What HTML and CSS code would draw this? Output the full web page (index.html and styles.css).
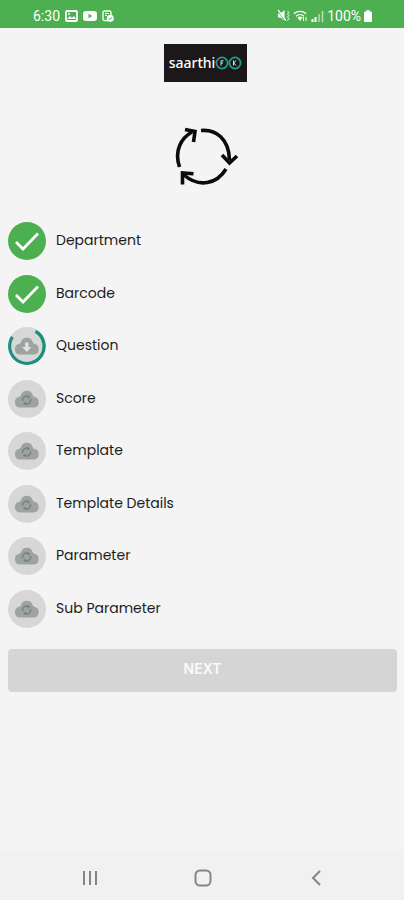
FILE: index.html
```html
<!DOCTYPE html>
<html lang="en">
<head>
<meta charset="utf-8">
<meta name="viewport" content="width=device-width, initial-scale=1">
<title>Saarthi sync</title>
<link rel="stylesheet" href="styles.css">
</head>
<body>
<svg class="defs" aria-hidden="true">
  <symbol id="check" viewBox="0 0 38 38">
    <path d="M8 20l7 7L30 11.500" fill="none" stroke="#fff" stroke-width="2.800"/>
  </symbol>
  <symbol id="cloud" viewBox="0 0 38 38">
    <path d="M12 27.500a5.400 5.400 0 0 1-.6-10.700q1.300-.4 1.600-1.700a6 6 0 0 1 11.600 0q.3 1.300 1.600 1.700a5.400 5.400 0 0 1-.6 10.700z" fill="#9da39f"/>
  </symbol>
  <symbol id="pending" viewBox="0 0 38 38">
    <use href="#cloud"/>
    <path d="M14.600 21a4.200 4.200 0 0 1 6.500-4.200M22.600 19a4.200 4.200 0 0 1-6.500 4.300" fill="none" stroke="#75807a" stroke-width="1.300"/>
    <path d="M19.800 15.300l2.600 2-3 1.200zM17.500 25l-2.700-2 3.100-1.200z" fill="#75807a"/>
  </symbol>
  <symbol id="loading" viewBox="0 0 38 38">
    <use href="#cloud"/>
    <path d="M17.100 15.500h3.400v4.500h3L18.800 25l-4.700-5h3z" fill="#e2e2e2"/>
    <path d="M27.500 4.300A17.300 17.300 0 1 1 4.300 9.800" fill="none" stroke="#1b9080" stroke-width="3.400"/>
  </symbol>
</svg>

<header class="status">
  <div class="status-group">
    <span>6:30</span>
    <svg width="13" height="12" viewBox="0 0 13 12"><rect x="1" y="1" width="11" height="10" rx="1" fill="none" stroke="#fff" stroke-width="1.800"/><path d="M2 9l3-3 2 2 2-2 2 3z" fill="#fff"/><circle cx="4" cy="4" r="1" fill="#fff"/></svg>
    <svg width="14" height="12" viewBox="0 0 14 12"><rect y="1" width="14" height="10" rx="3" fill="#fff"/><path d="M5.500 3.800v4.400L9.300 6z" fill="#4caf50"/></svg>
    <svg width="12" height="12" viewBox="0 0 12 12"><rect x="1" y="1" width="8" height="9.500" rx="1.500" fill="none" stroke="#fff" stroke-width="1.300"/><path d="M3 3.500h4M3 5.500h2" stroke="#fff"/><circle cx="8.300" cy="8.200" r="3.500" fill="#fff"/><path d="M6.500 8.200l1.300 1.300 2.400-2.400" fill="none" stroke="#4caf50"/></svg>
  </div>
  <div class="status-group status-right">
    <svg width="13" height="13" viewBox="0 0 13 13"><path d="M1 4.500h2.500L7.500 1v11L3.500 8.500H1z" fill="#fff"/><path d="M.5 1.500l7.500 10.500" stroke="#4caf50"/><path d="M1 .8l8 10.700" stroke="#fff" stroke-width="1.300"/><path d="M10.500 2l1.500 1.500-1.500 1.500L12 6.500 10.500 8l1.500 1.500-1.500 2" fill="none" stroke="#fff"/></svg>
    <svg width="15" height="13" viewBox="0 0 15 13"><path d="M.8 4.700a9.500 9.500 0 0 1 12.400 0M3 7.200a6 6 0 0 1 8 0" fill="none" stroke="#fff" stroke-width="1.300"/><path d="M4.500 8.500a4 4 0 0 1 5 0L7 12z" fill="#fff"/><path d="M10.500 8v4M13 8v4" stroke="#fff"/></svg>
    <svg width="13" height="12" viewBox="0 0 13 12"><path d="M1.500 12V9M4.500 12V7" stroke="#fff" stroke-width="2"/><path d="M8 12V4M11.500 12V1" stroke="#b9dfba" stroke-width="1.500"/></svg>
    <span>100%</span>
    <svg width="8" height="12" viewBox="0 0 8 12"><path d="M2.500 0h3v1.500H7q1 0 1 1V11q0 1-1 1H1q-1 0-1-1V2.500q0-1 1-1h1.500z" fill="#fff"/></svg>
  </div>
</header>

<main class="screen">
  <div class="logo">
    <span>saarthi</span>
    <svg width="27" height="14" viewBox="0 0 27 14" aria-hidden="true"><g fill="none" stroke="#17a08f" stroke-width="1.800"><circle cx="7" cy="7" r="5.600"/><circle cx="20" cy="7" r="5.600"/></g><path d="M6 9.500V4.800h2.500M6 7h2M18.500 4.500v5M21 4.500L18.800 7 21 9.500" fill="none" stroke="#d5e5e3"/></svg>
  </div>

  <svg class="sync" width="66" height="60" viewBox="0 0 66 60" role="img" aria-label="Syncing">
    <g fill="none" stroke="#0b0b0b" stroke-width="3.600">
      <path d="M28 4.500C43 3 56 13 56.500 34"/>
      <path d="M49 29l7.500 8 7.500-7"/>
      <path d="M53 43C44 58 26 62 11 49"/>
      <path d="M9.500 58.500V47l11 .8"/>
      <path d="M6.500 41C1 25 8 12 19 6"/>
      <path d="M12 3.500l10 2-1.500 10.500"/>
    </g>
  </svg>

  <ul class="steps">
    <li><svg class="badge done"><use href="#check"/></svg><span>Department</span></li>
    <li><svg class="badge done"><use href="#check"/></svg><span>Barcode</span></li>
    <li><svg class="badge"><use href="#loading"/></svg><span>Question</span></li>
    <li><svg class="badge"><use href="#pending"/></svg><span>Score</span></li>
    <li><svg class="badge"><use href="#pending"/></svg><span>Template</span></li>
    <li><svg class="badge"><use href="#pending"/></svg><span>Template Details</span></li>
    <li><svg class="badge"><use href="#pending"/></svg><span>Parameter</span></li>
    <li><svg class="badge"><use href="#pending"/></svg><span>Sub Parameter</span></li>
  </ul>

  <button class="next" type="button" disabled>NEXT</button>
</main>

<nav class="navbar" aria-label="System">
  <button type="button" aria-label="Recents"><svg width="18" height="18" viewBox="0 0 18 18"><path d="M3 2v14M9 2v14M15 2v14"/></svg></button>
  <button type="button" aria-label="Home"><svg width="18" height="18" viewBox="0 0 18 18"><rect x="1.500" y="1.500" width="15" height="15" rx="4.500"/></svg></button>
  <button type="button" aria-label="Back"><svg width="18" height="18" viewBox="0 0 18 18"><path d="M13 2L6 9l7 7"/></svg></button>
</nav>
</body>
</html>
```
FILE: styles.css
```css
* {
  box-sizing: border-box;
}

body {
  margin: 0;
  min-height: 100vh;
  display: flex;
  flex-direction: column;
  background: #f4f4f4;
  color: #1c1c1c;
  font-family: Poppins, Inter, "Liberation Sans", sans-serif;
}

.defs {
  position: absolute;
  width: 0;
  height: 0;
}

.status {
  display: flex;
  justify-content: space-between;
  align-items: center;
  height: 28px;
  padding: 3px 32px 0 33px;
  background: #4caf50;
  color: #fff;
  font: 14px/20px Roboto, sans-serif;
}

.status-group {
  display: flex;
  align-items: center;
  gap: 5px;
}

.status-right {
  gap: 3px;
}

.screen {
  flex: 1;
  display: flex;
  flex-direction: column;
  padding: 16px 7px 16px 8px;
}

.logo {
  align-self: center;
  display: flex;
  align-items: center;
  justify-content: center;
  width: 83px;
  height: 38px;
  margin-left: 6px;
  background: #1c1819;
  color: #fff;
  font: 500 14px/20px "Noto Sans", sans-serif;
}

.sync {
  align-self: center;
  margin: 44px 0 36px 6px;
}

.steps {
  display: flex;
  flex-direction: column;
  justify-content: space-between;
  min-height: 406px;
  margin: 0;
  padding: 0;
  list-style: none;
}

.steps li {
  display: flex;
  align-items: center;
  gap: 10px;
  font-size: 14px;
  line-height: 20px;
}

.steps span {
  padding-bottom: 2px;
}

.badge {
  flex: none;
  width: 38px;
  height: 38px;
  border-radius: 50%;
  background: #d7d7d7;
}

.done {
  background: #4caf50;
}

.next {
  height: 43px;
  margin-top: 21px;
  padding: 0 0 4px;
  border: 0;
  border-radius: 4px;
  background: #d5d5d5;
  color: #fafafa;
  font: 600 14px/20px Inter, sans-serif;
}

.navbar {
  display: flex;
  justify-content: space-around;
  align-items: center;
  height: 50px;
  padding: 6px 32px 0 34px;
  background: #f1f1f1;
}

.navbar button {
  display: flex;
  padding: 0;
  border: 0;
  background: none;
}

.navbar svg {
  fill: none;
  stroke: #858585;
  stroke-width: 2;
}
```
